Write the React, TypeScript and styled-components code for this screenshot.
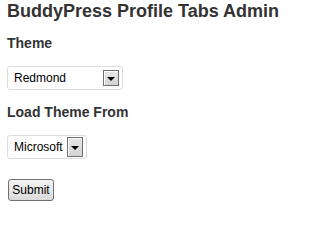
import styled, { createGlobalStyle } from 'styled-components';

const GlobalStyle = createGlobalStyle({
    body: {
        margin: 0,
        background: '#ffffff',
        fontFamily: '"Liberation Sans", Arial, sans-serif'
    }
});

const Page = styled.div({
    padding: '1px 7px 0',
    display: 'flex',
    flexDirection: 'column',
    gap: '14px'
});

const Title = styled.h2({
    margin: 0,
    fontSize: '18px',
    lineHeight: '20px',
    fontWeight: 'bold',
    color: '#333333'
});

const Form = styled.form({
    display: 'flex',
    flexDirection: 'column',
    gap: '14px'
});

const Field = styled.div({
    display: 'flex',
    flexDirection: 'column',
    alignItems: 'flex-start',
    gap: '15px'
});

const Label = styled.h3({
    margin: 0,
    fontSize: '14px',
    lineHeight: '16px',
    fontWeight: 'bold',
    color: '#333333'
});

const Select = styled.div<{ $width: number }>((props) => ({
    boxSizing: 'border-box',
    width: props.$width + 'px',
    height: '24px',
    display: 'flex',
    alignItems: 'center',
    gap: '3px',
    padding: '0 3px 0 6px',
    border: '1px solid #dcdcdc',
    borderRadius: '3px',
    background: '#ffffff',
    fontSize: '12px',
    color: '#000000'
}));

const Value = styled.span({
    flex: 1,
    whiteSpace: 'nowrap'
});

const Arrow = styled.span<{ $height: number }>((props) => ({
    boxSizing: 'border-box',
    flex: 'none',
    width: '16px',
    height: props.$height + 'px',
    display: 'flex',
    alignItems: 'center',
    justifyContent: 'center',
    border: '1px solid #6f6f6f',
    boxShadow: 'inset 1px 1px 0 #ffffff',
    background: 'linear-gradient(#e8e8e8, #d4d4d4)',

    '&::after': {
        content: '""',
        display: 'block',
        width: 0,
        height: 0,
        borderLeft: '4px solid transparent',
        borderRight: '4px solid transparent',
        borderTop: '4px solid #000000',
        marginTop: '1px'
    }
}));

const SubmitRow = styled.div({
    marginTop: '6px',
    paddingLeft: '1px'
});

const Button = styled.button({
    boxSizing: 'border-box',
    width: '46px',
    height: '22px',
    padding: 0,
    border: '1px solid #707070',
    borderRadius: '3px',
    background: 'linear-gradient(#f4f4f4, #dadada)',
    fontFamily: '"Liberation Sans", Arial, sans-serif',
    fontSize: '12px',
    color: '#000000'
});

export default function App() {
    return (
        <Page>
            <GlobalStyle />
            <Title>BuddyPress Profile Tabs Admin</Title>
            <Form onSubmit={(e) => e.preventDefault()}>
                <Field>
                    <Label>Theme</Label>
                    <Select $width={116}>
                        <Value>Redmond</Value>
                        <Arrow $height={16} />
                    </Select>
                </Field>
                <Field>
                    <Label>Load Theme From</Label>
                    <Select $width={80}>
                        <Value>Microsoft</Value>
                        <Arrow $height={20} />
                    </Select>
                </Field>
                <SubmitRow>
                    <Button type="submit">Submit</Button>
                </SubmitRow>
            </Form>
        </Page>
    );
}
